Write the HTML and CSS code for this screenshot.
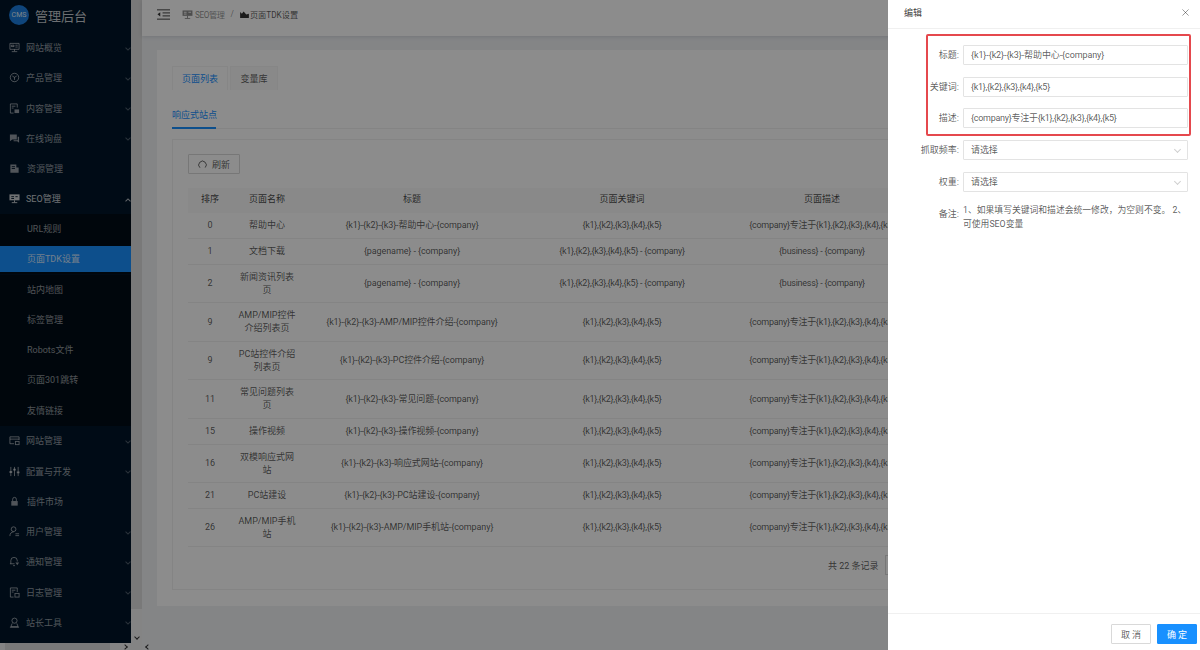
FILE: index.html
```html
<!DOCTYPE html>
<html lang="zh">
<head>
<meta charset="utf-8">
<title>页面TDK设置</title>
<link rel="stylesheet" href="styles.css">
</head>
<body>
<div class="app">
  <div class="leftcol">
    <div class="siderow">
      <aside class="sidebar">
        <div class="logo"><span class="logo-badge">CMS</span><span class="logo-text">管理后台</span></div>
        <ul class="menu">
          <li class="item"><svg class="ic" viewBox="0 0 12 12"><path d="M1 1.500h10v6.500H1zM2.500 3.500h3v1.500h-3zM7 3.500h2.500M7 5.500h2.500M6 8v2M3 10.500h6" fill="none" stroke="currentColor"/></svg><span>网站概览</span><i class="chev"></i></li>
          <li class="item"><svg class="ic" viewBox="0 0 12 12"><circle cx="6" cy="6" r="4.600" fill="none" stroke="currentColor"/><path d="M3.600 4.400 6 5.800l2.400-1.400M6 5.800v2.800" fill="none" stroke="currentColor"/></svg><span>产品管理</span><i class="chev"></i></li>
          <li class="item"><svg class="ic" viewBox="0 0 12 12"><path d="M5 11H1.500V1h7.500v4M3 3.500h4M3 5.500h2" fill="none" stroke="currentColor"/><rect x="6" y="7" width="5" height="4" fill="currentColor"/></svg><span>内容管理</span><i class="chev"></i></li>
          <li class="item"><svg class="ic" viewBox="0 0 12 12"><path d="M1 1.500h7.500v5.500H3.500L1 9z" fill="currentColor"/><path d="M9.500 4H11v6.500L9 9H5V8h4.500z" fill="currentColor"/></svg><span>在线询盘</span><i class="chev"></i></li>
          <li class="item"><svg class="ic" viewBox="0 0 12 12"><path d="M1.500 1.500H8v3.500h2.500v5.500h-9z" fill="currentColor"/><path d="M3 4h3.500M3 6h3.500" stroke="#001529"/></svg><span class="shift">资源管理</span></li>
          <li class="item open"><svg class="ic" viewBox="0 0 12 12"><path d="M.5 1.500h11v6.500H.5z" fill="currentColor"/><path d="M6 8v2M3 10.500h6" stroke="currentColor"/><path d="M2.500 4h3M7 4h2.500M2.500 6h3" stroke="#001529"/></svg><span>SEO管理</span><i class="chev up"></i></li>
          <li class="sub">URL规则</li>
          <li class="sub active">页面TDK设置</li>
          <li class="sub">站内地图</li>
          <li class="sub">标签管理</li>
          <li class="sub">Robots文件</li>
          <li class="sub">页面301跳转</li>
          <li class="sub">友情链接</li>
          <li class="item"><svg class="ic" viewBox="0 0 12 12"><path d="M5.500 9.500H1V2h10v3.500M1 4.500h10" fill="none" stroke="currentColor"/><rect x="7" y="7" width="4" height="3.500" fill="none" stroke="currentColor"/></svg><span>网站管理</span><i class="chev"></i></li>
          <li class="item"><svg class="ic" viewBox="0 0 12 12"><path d="M2 1v10M6 1v10M10 1v10" stroke="currentColor"/><path d="M.5 6.500h3M4.500 4h3M8.500 7h3" stroke="currentColor" stroke-width="2"/></svg><span>配置与开发</span><i class="chev"></i></li>
          <li class="item"><svg class="ic" viewBox="0 0 12 12"><rect x="2.500" y="5.500" width="7" height="5" fill="currentColor"/><path d="M4 5.500V3.500a2 2 0 0 1 4 0v2" fill="none" stroke="currentColor"/></svg><span class="shift">插件市场</span></li>
          <li class="item"><svg class="ic" viewBox="0 0 12 12"><circle cx="5" cy="3.500" r="2.600" fill="none" stroke="currentColor"/><path d="M1 11c0-3 1.500-4.500 4-4.500M7 8.500h4M7 10.500h4" fill="none" stroke="currentColor"/></svg><span>用户管理</span><i class="chev"></i></li>
          <li class="item"><svg class="ic" viewBox="0 0 12 12"><path d="M2 8.500V5a3.500 3.500 0 0 1 7 0v1M1 8.500h5M4.500 10.500h2" fill="none" stroke="currentColor"/><path d="M7 7h4l-2 3z" fill="currentColor"/></svg><span>通知管理</span><i class="chev"></i></li>
          <li class="item"><svg class="ic" viewBox="0 0 12 12"><path d="M5 11H1.500V1h7.500v4.500M3 3.500h4M3 5.500h2" fill="none" stroke="currentColor"/><rect x="6.500" y="7" width="4.500" height="4" fill="none" stroke="currentColor"/></svg><span>日志管理</span><i class="chev"></i></li>
          <li class="item"><svg class="ic" viewBox="0 0 12 12"><circle cx="6" cy="4" r="2.800" fill="none" stroke="currentColor"/><path d="M3.500 7 2 10.500h8L8.500 7M1 11.200h10" fill="none" stroke="currentColor"/></svg><span>站长工具</span><i class="chev"></i></li>
        </ul>
      </aside>
      <div class="vbar"><div class="vthumb"></div><i class="vdown"></i></div>
    </div>
    <div class="hbar"><div class="hthumb"></div><i class="hright"></i></div>
  </div>

  <main class="main">
    <header class="topbar">
      <svg class="fold" viewBox="0 0 14 11"><path d="M0 .5h14M6 3.800h8M6 7h8M0 10.500h14" stroke="currentColor" fill="none"/><path d="M3.500 3 .5 5.300l3 2.300z" fill="currentColor"/></svg>
      <nav class="crumbs">
        <svg class="cr-ic" viewBox="0 0 12 10"><path d="M.5.500h11v6H.5z" fill="currentColor"/><path d="M6 6.500V9M3 9.500h6" stroke="currentColor"/><path d="M2 2.500h3M7 2.500h3M2 4.500h3" stroke="#fff"/></svg>
        <span class="cr-a">SEO管理</span>
        <span class="cr-sep">/</span>
        <svg class="cr-ic2" viewBox="0 0 10 8"><path d="M0 8V1l2 2 2-2.500L7 4l3-1v5z" fill="currentColor"/></svg>
        <span class="cr-b">页面TDK设置</span>
      </nav>
    </header>
    <section class="content">
      <div class="card">
        <div class="tabs">
          <div class="tab on">页面列表</div>
          <div class="tab">变量库</div>
        </div>
        <div class="subtabs"><div class="subtab">响应式站点</div></div>
        <div class="panel">
          <button class="refresh"><svg class="re" viewBox="0 0 10 10"><path d="M2.200 8.600A4.200 4.200 0 1 1 8 8.400" fill="none" stroke="currentColor"/></svg>刷新</button>
          <table class="grid">
            <colgroup><col class="c1"><col class="c2"><col class="c3"><col class="c4"><col class="c5"><col class="c6"></colgroup>
            <thead><tr><th>排序</th><th>页面名称</th><th>标题</th><th>页面关键词</th><th>页面描述</th><th>操作</th></tr></thead>
            <tbody>
              <tr><td>0</td><td>帮助中心</td><td>{k1}-{k2}-{k3}-帮助中心-{company}</td><td>{k1},{k2},{k3},{k4},{k5}</td><td>{company}专注于{k1},{k2},{k3},{k4},{k5}</td><td></td></tr>
              <tr><td>1</td><td>文档下载</td><td>{pagename} - {company}</td><td>{k1},{k2},{k3},{k4},{k5} - {company}</td><td>{business} - {company}</td><td></td></tr>
              <tr><td>2</td><td>新闻资讯列表页</td><td>{pagename} - {company}</td><td>{k1},{k2},{k3},{k4},{k5} - {company}</td><td>{business} - {company}</td><td></td></tr>
              <tr><td>9</td><td>AMP/MIP控件介绍列表页</td><td>{k1}-{k2}-{k3}-AMP/MIP控件介绍-{company}</td><td>{k1},{k2},{k3},{k4},{k5}</td><td>{company}专注于{k1},{k2},{k3},{k4},{k5}</td><td></td></tr>
              <tr><td>9</td><td>PC站控件介绍列表页</td><td>{k1}-{k2}-{k3}-PC控件介绍-{company}</td><td>{k1},{k2},{k3},{k4},{k5}</td><td>{company}专注于{k1},{k2},{k3},{k4},{k5}</td><td></td></tr>
              <tr><td>11</td><td>常见问题列表页</td><td>{k1}-{k2}-{k3}-常见问题-{company}</td><td>{k1},{k2},{k3},{k4},{k5}</td><td>{company}专注于{k1},{k2},{k3},{k4},{k5}</td><td></td></tr>
              <tr><td>15</td><td>操作视频</td><td>{k1}-{k2}-{k3}-操作视频-{company}</td><td>{k1},{k2},{k3},{k4},{k5}</td><td>{company}专注于{k1},{k2},{k3},{k4},{k5}</td><td></td></tr>
              <tr><td>16</td><td>双模响应式网站</td><td>{k1}-{k2}-{k3}-响应式网站-{company}</td><td>{k1},{k2},{k3},{k4},{k5}</td><td>{company}专注于{k1},{k2},{k3},{k4},{k5}</td><td></td></tr>
              <tr><td>21</td><td>PC站建设</td><td>{k1}-{k2}-{k3}-PC站建设-{company}</td><td>{k1},{k2},{k3},{k4},{k5}</td><td>{company}专注于{k1},{k2},{k3},{k4},{k5}</td><td></td></tr>
              <tr><td>26</td><td>AMP/MIP手机站</td><td>{k1}-{k2}-{k3}-AMP/MIP手机站-{company}</td><td>{k1},{k2},{k3},{k4},{k5}</td><td>{company}专注于{k1},{k2},{k3},{k4},{k5}</td><td></td></tr>
            </tbody>
          </table>
          <div class="pager"><span>共 22 条记录</span><span class="pagebox"></span></div>
        </div>
      </div>
    </section>
    <div class="hrest"><i class="hleft"></i></div>
  </main>
</div>

<div class="mask"></div>

<aside class="drawer">
  <div class="d-head"><span>编辑</span><svg class="close" viewBox="0 0 8 8"><path d="M.5.500l7 7M7.500.500l-7 7" stroke="currentColor" fill="none"/></svg></div>
  <div class="d-body">
    <div class="mark">
      <div class="row"><label>标题:</label><div class="input">{k1}-{k2}-{k3}-帮助中心-{company}</div></div>
      <div class="row"><label>关键词:</label><div class="input tight">{k1},{k2},{k3},{k4},{k5}</div></div>
      <div class="row"><label>描述:</label><div class="input tight">{company}专注于{k1},{k2},{k3},{k4},{k5}</div></div>
    </div>
    <div class="row"><label>抓取频率:</label><div class="input select">请选择<i class="sel-chev"></i></div></div>
    <div class="row"><label>权重:</label><div class="input select">请选择<i class="sel-chev"></i></div></div>
    <div class="row note"><label>备注:</label><p>1、如果填写关键词和描述会统一修改，为空则不变。 2、可使用SEO变量</p></div>
  </div>
  <div class="d-foot"><button class="btn">取 消</button><button class="btn primary">确 定</button></div>
</aside>
</body>
</html>
```
FILE: styles.css
```css
* { box-sizing: border-box; }
html, body { margin: 0; height: 100%; overflow: hidden; }
body {
  font-family: Roboto, "Noto Sans CJK SC", sans-serif;
  font-size: 9px;
  color: rgba(0, 0, 0, .65);
  background: #f0f2f5;
}
ul { list-style: none; margin: 0; padding: 0; }
.app { display: flex; height: 650px; }

/* left column */
.leftcol { width: 142px; flex: none; display: flex; flex-direction: column; }
.siderow { display: flex; height: 643px; }
.sidebar { width: 131px; background: #001529; color: rgba(255, 255, 255, .58); overflow: hidden; }
.logo { display: flex; align-items: center; height: 32.500px; padding: 0 0 2px 9px; }
.logo-badge {
  width: 20px; height: 20px; border-radius: 50%;
  background: #1c7fe0; color: rgba(255, 255, 255, .9); font-size: 7px;
  display: flex; align-items: center; justify-content: center;
}
.logo-text { margin-left: 6px; font-size: 13px; color: rgba(255, 255, 255, .78); }
.item { position: relative; display: flex; align-items: center; height: 30.250px; padding-left: 9px; }
.ic { width: 11px; height: 11px; flex: none; margin-right: 6px; }
.shift { margin-left: 1px; }
.open { color: rgba(255, 255, 255, .8); }
.chev {
  position: absolute; right: 1px; top: 13px;
  width: 4px; height: 4px;
  border-right: 1px solid rgba(255, 255, 255, .3);
  border-bottom: 1px solid rgba(255, 255, 255, .3);
  transform: rotate(45deg);
}
.chev.up { transform: rotate(225deg); top: 15px; border-color: rgba(255, 255, 255, .7); }
.sub { height: 30.250px; line-height: 30.250px; padding-left: 27px; background: #000c17; }
.sub.active { background: #1890ff; color: rgba(255, 255, 255, .8); height: 26px; line-height: 26px; margin: 2px 0 2.250px; box-shadow: 0 -2px 0 #000c17, 0 2.250px 0 #000c17; }
.vbar { width: 11px; position: relative; background: #f1f1f1; }
.vthumb { height: 609px; background: #dcdcdc; }
.vdown {
  position: absolute; left: 4px; top: 635px; width: 4px; height: 4px;
  border-right: 1px solid #333; border-bottom: 1px solid #333; transform: rotate(45deg);
}
.hbar { height: 7px; display: flex; background: #f1f1f1; position: relative; }
.hthumb { width: 105px; margin-left: 5px; background: #dcdcdc; }
.hright, .hleft {
  position: absolute; top: 2px; width: 4px; height: 4px;
  border-top: 1px solid #333;
}
.hright { left: 123px; border-right: 1px solid #333; transform: rotate(45deg); }
.hleft { left: 146px; border-left: 1px solid #333; transform: rotate(-45deg); top: 645px; }

/* main */
.main { flex: 1; min-width: 0; display: flex; flex-direction: column; height: 650px; }
.topbar {
  height: 36px; flex: none; background: #fff; display: flex; align-items: center;
  padding: 0 0 8px 15px; box-shadow: 0 1px 4px rgba(0, 21, 41, .12);
  position: relative;
}
.fold { width: 13px; height: 11px; color: #333; margin-right: 12px; }
.crumbs { display: flex; align-items: center; color: rgba(0, 0, 0, .45); font-size: 8.200px; }
.cr-ic { width: 11px; height: 9px; margin-right: 2px; }
.cr-a { letter-spacing: -.4px; }
.cr-sep { margin: 0 6px; }
.cr-ic2 { width: 9px; height: 7px; margin-right: 1px; color: #333; }
.cr-b { color: rgba(0, 0, 0, .65); }
.content { flex: 1; padding: 14px 15px 0; min-height: 0; }
.card { height: 556px; background: #fff; padding: 16px 15px 0; }
.tabs { display: flex; height: 24px; gap: 2px; }
.tab { height: 24px; line-height: 24px; text-align: center; background: #fafafa; border: 1px solid #f5f5f5; border-bottom: 0; width: 48px; }
.tab.on { width: 56px; background: #fff; color: #1890ff; }
.subtabs { margin-top: 18px; height: 21px; border-bottom: 1px solid #f0f0f0; }
.subtab { width: 44px; height: 21px; line-height: 14px; color: #1890ff; border-bottom: 2px solid #1890ff; white-space: nowrap; }
.panel { height: 451px; margin-top: 10px; border: 1px solid #f0f0f0; padding: 14px 15px 0; overflow: hidden; }
.refresh {
  display: flex; align-items: center; width: 52px; height: 20px; padding: 0 0 0 9px;
  font: inherit; color: inherit; background: #fff; border: 1px solid #d9d9d9; border-radius: 1px;
}
.re { width: 9px; height: 9px; margin-right: 5px; }
.grid { table-layout: fixed; width: 970px; border-collapse: collapse; margin-top: 14px; }
.c1 { width: 44px; } .c2 { width: 70px; } .c3 { width: 220px; } .c4 { width: 200px; } .c5 { width: 200px; } .c6 { width: 236px; }
.grid th, .grid td { padding: 6px 6px 5.600px; line-height: 13px; text-align: center; font-weight: 400; border-bottom: 1px solid #f0f0f0; }
.grid th { background: #fafafa; padding: 5px 6px 7px; border-bottom: 0; color: rgba(0, 0, 0, .75); }
.grid td { height: 25.600px; }
.grid td:nth-child(3) { letter-spacing: -.1px; }
.grid td:nth-child(4), .grid td:nth-child(5) { letter-spacing: -.28px; }
.pager { display: flex; align-items: center; margin: 8px 0 0 640px; height: 20px; }
.pagebox { width: 40px; height: 20px; margin-left: 6px; border: 1px solid #d9d9d9; }
.hrest { height: 7px; flex: none; }

/* overlay and drawer */
.mask { position: fixed; inset: 0; background: rgba(0, 0, 0, .45); }
.drawer {
  position: fixed; top: 0; right: 0; bottom: 0; width: 312px; background: #fff;
  display: flex; flex-direction: column;
}
.d-head {
  height: 29px; flex: none; display: flex; align-items: center; justify-content: space-between;
  padding: 0 11px 4px 16px; border-bottom: 1px solid #f0f0f0; color: rgba(0, 0, 0, .8);
}
.close { width: 7px; height: 7px; color: rgba(0, 0, 0, .45); }
.d-body { flex: 1; padding: 5px 12px 0 38px; }
.mark { border: 2px solid #e5484d; border-radius: 2px; margin-right: -3px; padding: 9px 1px 7px 0; height: 102px; display: flex; flex-direction: column; gap: 11.500px; }
.row { display: flex; align-items: flex-start; }
.row label { width: 37px; flex: none; display: flex; justify-content: flex-end; padding-right: 4px; line-height: 20px; white-space: nowrap; }
.mark .row label { width: 35px; }
.input {
  flex: 1; height: 20px; line-height: 18px; padding: 0 7px;
  border: 1px solid #e3e3e3; border-radius: 1px; white-space: nowrap; background: #fff; letter-spacing: -.1px;
}
.input.tight { letter-spacing: -.28px; }
.d-body > .row { margin-top: 4px; }
.d-body > .row + .row { margin-top: 12px; }
.select { display: flex; justify-content: space-between; align-items: center; }
.sel-chev { width: 5px; height: 5px; margin: 0 0 2px 0; border-right: 1px solid #d0d0d0; border-bottom: 1px solid #d0d0d0; transform: rotate(45deg); }
.note p { flex: 1; margin: -1px 0 0; font-size: 8.800px; line-height: 14px; }
.d-body > .row.note { margin-top: 12px; }
.d-foot { height: 37px; flex: none; display: flex; justify-content: flex-end; gap: 6px; padding: 10px 3px 0 0; border-top: 1px solid #f0f0f0; }
.btn { width: 40px; height: 20px; font: inherit; color: inherit; background: #fff; border: 1px solid #d9d9d9; border-radius: 1px; padding: 0; }
.btn.primary { background: #1890ff; border-color: #1890ff; color: #fff; }
```
